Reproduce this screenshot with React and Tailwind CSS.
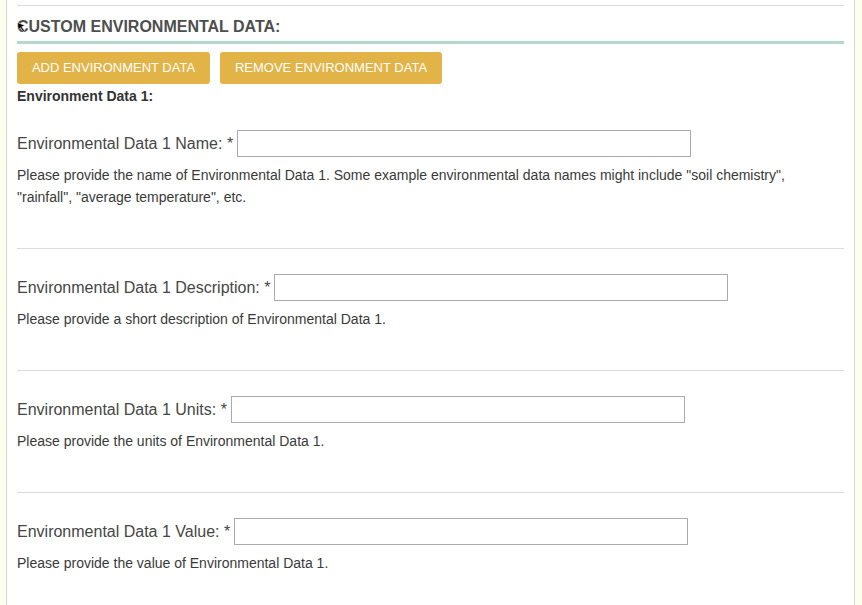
import React from 'react';

const fields = [
  {
    key: 'name',
    label: 'Environmental Data 1 Name:',
    help: 'Please provide the name of Environmental Data 1. Some example environmental data names might include "soil chemistry", "rainfall", "average temperature", etc.',
  },
  {
    key: 'description',
    label: 'Environmental Data 1 Description:',
    help: 'Please provide a short description of Environmental Data 1.',
  },
  {
    key: 'units',
    label: 'Environmental Data 1 Units:',
    help: 'Please provide the units of Environmental Data 1.',
  },
  {
    key: 'value',
    label: 'Environmental Data 1 Value:',
    help: 'Please provide the value of Environmental Data 1.',
  },
];

function Cursor() {
  return (
    <svg className="absolute left-[0px] top-[5px]" width="9" height="10" viewBox="0 0 9 10">
      <path d="M0.5 0.5 L8 3.5 L4.8 4.8 L7.5 8.5 L6 9.5 L3.5 5.8 L1.2 8 Z" fill="#000" stroke="#fff" strokeWidth="0.6" />
    </svg>
  );
}

export default function App() {
  return (
    <div className="flex min-h-[605px] bg-white font-['Liberation_Sans',Arial,sans-serif]">
      {/* left gutter */}
      <div className="w-[7px] shrink-0 bg-[#fbffee] border-r border-[#d6d6d0]" />

      <div className="flex-1 px-[10px] pb-[30px]">
        <div className="mt-[5px] h-px bg-[#dcdcdc]" />

        <h2 className="relative mt-[11px] pb-[4px] border-b-[3px] border-[#b4d8cf] text-[16px] leading-[20px] font-bold text-[#4e4e4e]">
          <Cursor />
          CUSTOM ENVIRONMENTAL DATA:
        </h2>

        <div className="mt-[8px] flex gap-[10px]">
          <button className="h-[32px] w-[193px] rounded-[3px] bg-[#e2b346] text-white text-[13px] uppercase">
            Add Environment Data
          </button>
          <button className="h-[32px] w-[222px] rounded-[3px] bg-[#e2b346] text-white text-[13px] uppercase">
            Remove Environment Data
          </button>
        </div>

        <div className="mt-[3px] text-[14px] leading-[18px] font-bold text-[#333]">Environment Data 1:</div>

        {fields.map((f, i) => (
          <div key={f.key}>
            {i > 0 && <div className="mt-[40px] h-px bg-[#dcdcdc]" />}
            <div className="mt-[25px] flex items-center">
              <label className="text-[16px] leading-[20px] text-[#464646]">
                {f.label} *
              </label>
              <input type="text" className="ml-[4px] w-[454px] h-[27px] border border-[#ababab] bg-white outline-none" />
            </div>
            <p className="mt-[7px] max-w-[815px] text-[14px] leading-[22px] text-[#3a3a3a]">{f.help}</p>
          </div>
        ))}
      </div>

      {/* right gutter */}
      <div className="w-[8px] shrink-0 bg-[#fbffee] border-l border-[#d6d6d0]" />
    </div>
  );
}
